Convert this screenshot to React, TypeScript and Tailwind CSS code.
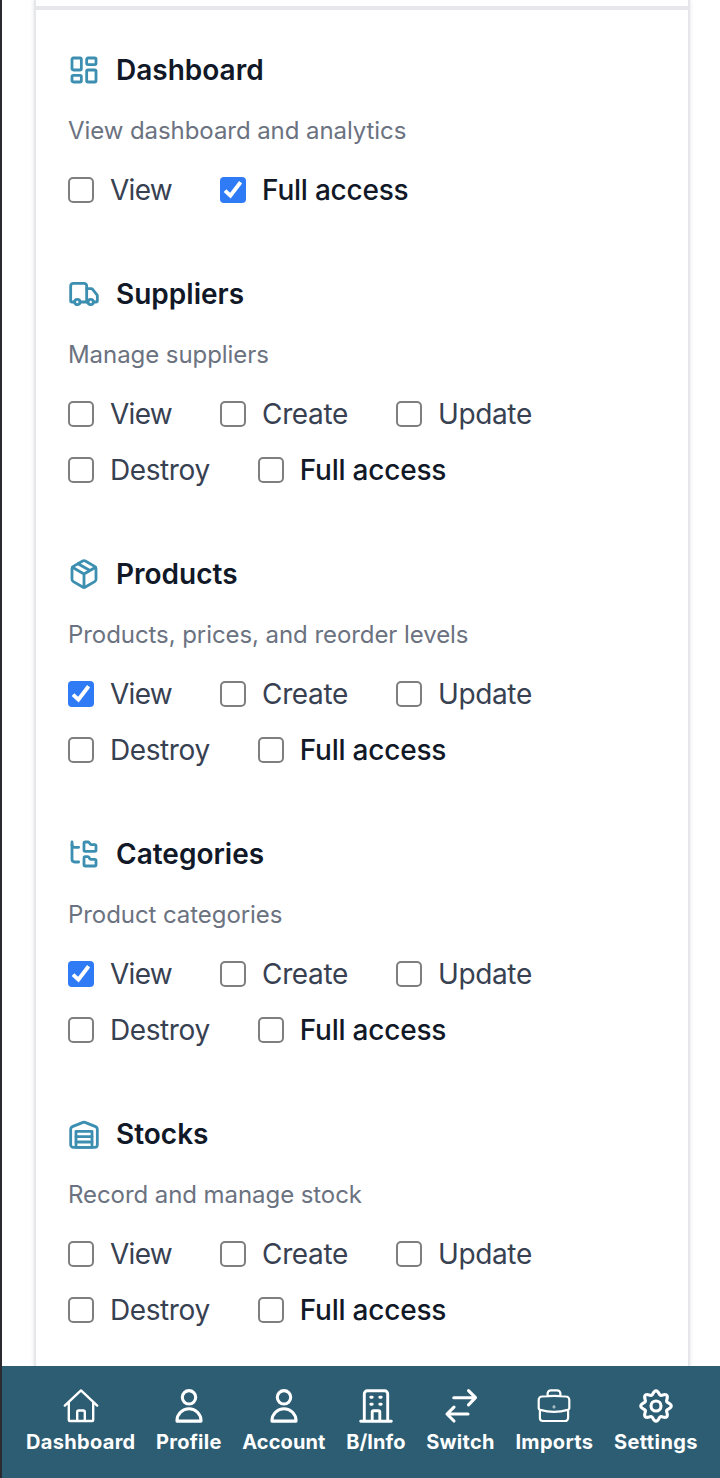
import React from "react";
import { LayoutDashboard, Truck, FolderTree } from "lucide-react";

const iconProps = { size: 32, strokeWidth: 2.1, color: "#3c8fb0" };

function Stroke({ children }: { children: React.ReactNode }) {
  return (
    <svg width="32" height="32" viewBox="0 0 24 24" fill="none" stroke="#3c8fb0" strokeWidth="2.1" strokeLinecap="round" strokeLinejoin="round">
      {children}
    </svg>
  );
}

const PackageIcon = () => (
  <Stroke>
    <path d="M21 16V8a2 2 0 0 0-1-1.73l-7-4a2 2 0 0 0-2 0l-7 4A2 2 0 0 0 3 8v8a2 2 0 0 0 1 1.73l7 4a2 2 0 0 0 2 0l7-4A2 2 0 0 0 21 16z" />
    <path d="m3.3 7 8.7 5 8.7-5M12 22V12M7.5 4.27l9 5.15" />
  </Stroke>
);

const WarehouseIcon = () => (
  <Stroke>
    <path d="M22 8.35V20a2 2 0 0 1-2 2H4a2 2 0 0 1-2-2V8.35A2 2 0 0 1 3.26 6.5l8-3.2a2 2 0 0 1 1.48 0l8 3.2A2 2 0 0 1 22 8.35Z" />
    <path d="M6 18h12M6 14h12" />
    <rect width="12" height="12" x="6" y="10" />
  </Stroke>
);

function Check({ checked }: { checked: boolean }) {
  return checked ? (
    <span className="flex size-[26px] shrink-0 items-center justify-center rounded-[4px] bg-[#2f7bf6]">
      <svg width="26" height="26" viewBox="0 0 26 26" fill="none" stroke="#fff" strokeWidth="3.9">
        <path d="M5 13.6 10.4 18.6 20.6 5.2" />
      </svg>
    </span>
  ) : (
    <span className="size-[26px] shrink-0 rounded-[5px] border-2 border-[#7f7f7f] bg-white" />
  );
}

type Section = { title: string; desc: string; icon: React.ReactNode; actions: string[]; on: string };
const crud = ["View", "Create", "Update", "Destroy", "Full access"];
const sections: Section[] = [
  { title: "Dashboard", desc: "View dashboard and analytics", icon: <LayoutDashboard {...iconProps} />, actions: ["View", "Full access"], on: "Full access" },
  { title: "Suppliers", desc: "Manage suppliers", icon: <Truck {...iconProps} />, actions: crud, on: "" },
  { title: "Products", desc: "Products, prices, and reorder levels", icon: <PackageIcon />, actions: crud, on: "View" },
  { title: "Categories", desc: "Product categories", icon: <FolderTree {...iconProps} />, actions: crud, on: "View" },
  { title: "Stocks", desc: "Record and manage stock", icon: <WarehouseIcon />, actions: crud, on: "" },
];

const labelStyle: Record<string, string> = {
  View: "tracking-[-0.7px] text-[#374151]",
  Create: "tracking-[-0.36px] text-[#374151]",
  Update: "tracking-[-0.36px] text-[#374151]",
  Destroy: "tracking-[-0.4px] text-[#374151]",
  "Full access": "tracking-[-0.22px] font-medium text-[#111827]",
};

function NavSvg({ w = 2.9, children }: { w?: number; children: React.ReactNode }) {
  return (
    <svg width="36" height="36" viewBox="0 0 36 36" fill="none" stroke="#fff" strokeWidth={w} strokeLinecap="round" strokeLinejoin="round">
      {children}
    </svg>
  );
}

const UserIcon = () => (
  <NavSvg w={3.1}>
    <circle cx="18" cy="9.3" r="6.7" />
    <path d="M6 33.1v-.5a12 11.8 0 0 1 24 0v.5z" />
  </NavSvg>
);

const cogPath =
  Array.from({ length: 145 }, (_, i) => {
    const t = (i / 144) * Math.PI * 2;
    const r = 13.4 + 1.8 * Math.cos(8 * t);
    return `${i ? "L" : "M"}${(18 + r * Math.cos(t)).toFixed(2)} ${(18 + r * Math.sin(t)).toFixed(2)}`;
  }).join("") + "Z";

const nav: { label: string; track: string; icon: React.ReactNode }[] = [
  {
    label: "Dashboard",
    track: "tracking-[0.32px]",
    icon: (
      <NavSvg w={2.4}>
        <path d="M1.8 17.6 18 2.4l16.2 15.2M5.8 14.5V32a1 1 0 0 0 1 1h22.4a1 1 0 0 0 1-1V14.5M14.2 33v-9a1.5 1.5 0 0 1 1.5-1.5h4.6a1.5 1.5 0 0 1 1.5 1.5v9" />
      </NavSvg>
    ),
  },
  { label: "Profile", track: "tracking-[0.25px]", icon: <UserIcon /> },
  { label: "Account", track: "tracking-[0.12px]", icon: <UserIcon /> },
  {
    label: "B/Info",
    track: "tracking-[0.1px]",
    icon: (
      <NavSvg w={2.9}>
        <path d="M2.7 33.2h30.6M6.3 33V5.8a3 3 0 0 1 3-3h17.4a3 3 0 0 1 3 3V33M14.2 33v-9a1.3 1.3 0 0 1 1.3-1.3h5a1.3 1.3 0 0 1 1.3 1.3v9M12.8 9.3h1.4M21.8 9.3h1.4M12.8 16.2h1.4M21.8 16.2h1.4" />
      </NavSvg>
    ),
  },
  {
    label: "Switch",
    track: "tracking-[0.3px]",
    icon: (
      <NavSvg w={3.1}>
        <path d="M10.8 9.7h20.7M25.5 2.6l7 7.1-7 7.1M25 26H4.5M11 19.2 4 26l7 7" />
      </NavSvg>
    ),
  },
  {
    label: "Imports",
    track: "tracking-[0.32px]",
    icon: (
      <NavSvg w={2.2}>
        <path d="M11.6 7.8V5.5a3.2 3.2 0 0 1 3.2-3.2h6.4a3.2 3.2 0 0 1 3.2 3.2v2.3M3.9 21.6V30a3 3 0 0 0 3 3h22.2a3 3 0 0 0 3-3v-8.4M6 8.5q12-1.4 24 0a3.3 3.3 0 0 1 3.3 3.3v8.4q0 1.2-1.5 1.7-13.8 4-27.6 0-1.5-.5-1.5-1.7v-8.4A3.3 3.3 0 0 1 6 8.5" />
        <circle cx="18" cy="19" r=".3" />
      </NavSvg>
    ),
  },
  {
    label: "Settings",
    track: "tracking-[0.42px]",
    icon: (
      <NavSvg w={3.1}>
        <path d={cogPath} />
        <circle cx="18" cy="18" r="5" />
      </NavSvg>
    ),
  },
];

export default function App() {
  return (
    <div className="flex h-[1478px] w-[720px] flex-col overflow-hidden border-l-2 border-[#2b2a30] bg-white font-['Inter',sans-serif]">
      <div className="flex min-h-0 flex-1 pl-8">
        <main className="w-[656px] border-x-2 border-[#e5e7eb] bg-white shadow-[0_0_4px_rgba(0,0,0,0.12)]">
          <div className="h-[10px] border-b-4 border-[#e5e7eb]" />
          <div className="flex flex-col gap-16 px-8 pt-10">
            {sections.map((s) => (
              <section key={s.title} className="flex flex-col">
                <h3 className="flex h-10 items-center gap-4 text-[28px] font-semibold text-[#111827]">
                  {s.icon}
                  <span>{s.title}</span>
                </h3>
                <p className="mt-[25px] h-8 text-[24px] leading-8 tracking-[-0.07px] text-[#6b7280]">{s.desc}</p>
                <div className="mt-[23px] flex flex-wrap gap-x-12 gap-y-4">
                  {s.actions.map((a) => (
                    <label key={a} className={`flex h-10 items-center gap-4 text-[28px] whitespace-nowrap ${labelStyle[a]}`}>
                      <Check checked={a === s.on} />
                      <span>{a}</span>
                    </label>
                  ))}
                </div>
              </section>
            ))}
          </div>
        </main>
      </div>
      <nav className="flex h-28 shrink-0 justify-between bg-[#2d5d72] pt-[22px] pr-[22px] pl-6 text-white">
        {nav.map((n) => (
          <div key={n.label} className="flex flex-col items-center">
            {n.icon}
            <span className={`mt-1 text-[20px] leading-7 font-bold ${n.track}`}>{n.label}</span>
          </div>
        ))}
      </nav>
    </div>
  );
}
